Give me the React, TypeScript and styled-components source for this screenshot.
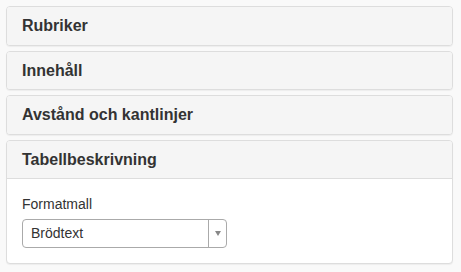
import React from "react";
import styled, { createGlobalStyle } from "styled-components";

const Global = createGlobalStyle`
  html, body { margin: 0; padding: 0; background: #f9f9f9; }
  body { font-family: "Liberation Sans", Arial, sans-serif; color: #333; font-size: 14px; line-height: 1.42857; }
  * { box-sizing: border-box; }
`;

const Page = styled.div`
  padding: 6px 8px 6px 6px;
`;

const Group = styled.div`
  display: flex;
  flex-direction: column;
  gap: 5px;
`;

const Panel = styled.div`
  background: #fff;
  border: 1px solid #ddd;
  border-radius: 4px;
  box-shadow: 0 1px 1px rgba(0, 0, 0, 0.05);
  overflow: hidden;
`;

const Heading = styled.div<{ $open?: boolean }>`
  background: #f5f5f5;
  padding: 10px 15px;
  border-bottom: ${(p) => (p.$open ? "1px solid #ddd" : "none")};
`;

const Title = styled.h4`
  margin: 0;
  font-size: 16px;
  font-weight: bold;
  line-height: 1.1;
  color: #333;
`;

const Body = styled.div`
  padding: 15px;
`;

const Label = styled.label`
  display: block;
  font-size: 14px;
  line-height: 20px;
  margin-bottom: 5px;
  color: #333;
`;

const Select = styled.div`
  display: flex;
  width: 205px;
  height: 29px;
  border: 1px solid #aaa;
  border-radius: 4px;
  background: #fff;
`;

const SelectText = styled.span`
  flex: 1;
  padding: 0 8px;
  line-height: 27px;
  font-size: 14px;
  color: #333;
`;

const Arrow = styled.span`
  width: 18px;
  border-left: 1px solid #aaa;
  display: flex;
  align-items: center;
  justify-content: center;
  &::after {
    content: "";
    border-left: 3px solid transparent;
    border-right: 3px solid transparent;
    border-top: 5px solid #888;
  }
`;

const sections = ["Rubriker", "Innehåll", "Avstånd och kantlinjer"];

export default function App() {
  return (
    <Page>
      <Global />
      <Group>
        {sections.map((s) => (
          <Panel key={s}>
            <Heading>
              <Title>{s}</Title>
            </Heading>
          </Panel>
        ))}
        <Panel>
          <Heading $open>
            <Title>Tabellbeskrivning</Title>
          </Heading>
          <Body>
            <Label>Formatmall</Label>
            <Select>
              <SelectText>Brödtext</SelectText>
              <Arrow />
            </Select>
          </Body>
        </Panel>
      </Group>
    </Page>
  );
}
